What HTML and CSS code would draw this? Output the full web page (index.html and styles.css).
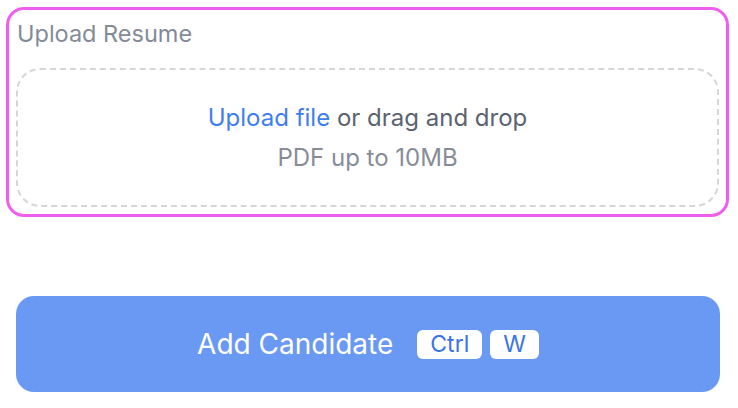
FILE: index.html
```html
<!DOCTYPE html>
<html lang="en">
<head>
  <meta charset="UTF-8" />
  <meta name="viewport" content="width=device-width, initial-scale=1.0"/>
  <title>Add Candidate</title>
  <link rel="stylesheet" href="styles.css">
</head>
<body>
  <div class="field">
    <label class="field-label" for="resume">Upload Resume</label>
    <div class="dropzone">
      <p class="drop-line"><span class="drop-link">Upload file</span> or drag and drop</p>
      <p class="drop-hint">PDF up to 10MB</p>
      <input type="file" id="resume" class="file-input" accept=".pdf">
    </div>
  </div>

  <button class="submit">
    <span>Add Candidate</span>
    <span class="keys">
      <kbd>Ctrl</kbd>
      <kbd>W</kbd>
    </span>
  </button>
</body>
</html>
```

FILE: styles.css
```css
body {
  margin: 0;
  padding: 7px 9px 0 6px;
  font-family: Inter, "Noto Sans", sans-serif;
  background: white;
}
.field {
  border: 3px solid #ee5ff0;
  border-radius: 18px;
  padding: 7px;
}
.field-label {
  display: block;
  font-size: 23.5px;
  line-height: 34px;
  color: #848b98;
  padding-left: 1px;
}
.dropzone {
  margin-top: 17px;
  height: 135px;
  border: 2px dashed #d4d6da;
  border-radius: 24px;
  display: flex;
  flex-direction: column;
  align-items: center;
  justify-content: center;
  gap: 8px;
}
.drop-line,
.drop-hint {
  margin: 0;
  font-size: 24px;
  line-height: 32px;
}
.drop-line {
  color: #5b6270;
}
.drop-link {
  color: #3f7ef0;
}
.drop-hint {
  color: #868d99;
}
.file-input {
  display: none;
}
.submit {
  display: flex;
  align-items: center;
  justify-content: center;
  gap: 24px;
  width: 704px;
  height: 96px;
  margin: 79px 0 0 10px;
  border: none;
  border-radius: 18px;
  background: #6a99f4;
  color: white;
  font-family: Inter, "Noto Sans", sans-serif;
  font-size: 28px;
  cursor: pointer;
}
.keys {
  display: flex;
  gap: 8px;
}
kbd {
  font-family: Inter, "Noto Sans", sans-serif;
  font-size: 23px;
  line-height: 29px;
  padding: 0 13px;
  background: white;
  color: #3b73e6;
  border-radius: 6px;
}
```
